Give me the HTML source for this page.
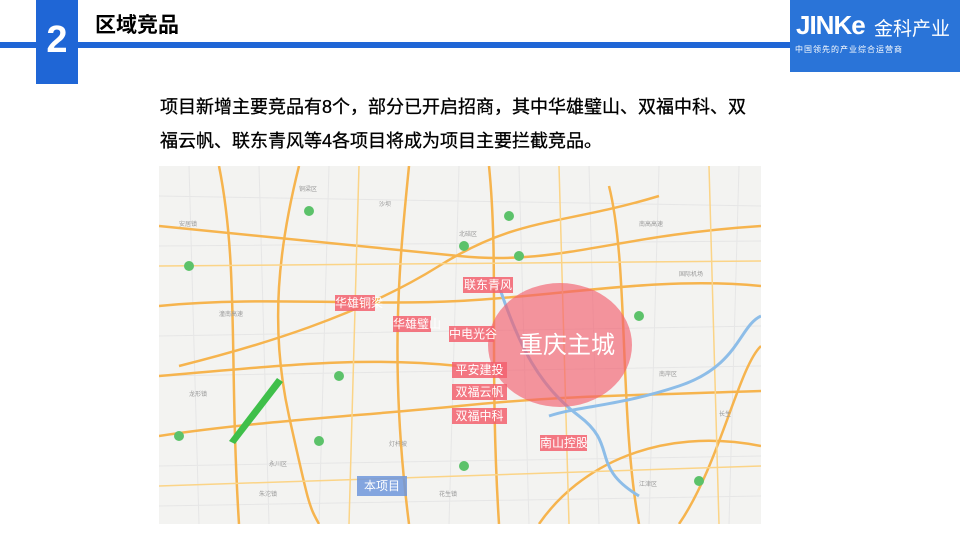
<!DOCTYPE html>
<html><head><meta charset="utf-8"><style>
body{margin:0;width:960px;height:540px;overflow:hidden;background:#fff;font-family:"Liberation Sans","Noto Sans CJK SC",sans-serif;position:relative}
.a{position:absolute}
.lab{position:absolute;background:rgba(242,96,110,.85);color:#fff;font-size:12px;line-height:16px;text-align:center;white-space:nowrap}
</style></head><body>
<div class="a" style="left:0;top:42px;width:792px;height:6px;background:#1f66d6"></div>
<div class="a" style="left:36px;top:0;width:42px;height:84px;background:#1f66d6;color:#fff;font-size:38px;font-weight:bold;text-align:center;line-height:80px">2</div>
<div class="a" style="left:95px;top:9px;font-size:21px;font-weight:bold;color:#000">区域竞品</div>
<div class="a" style="left:790px;top:0;width:170px;height:72px;background:#2a74d8;color:#fff">
<div class="a" style="left:6px;top:10px;font-size:26px;font-weight:bold;letter-spacing:-1px">JINKe</div>
<div class="a" style="left:84px;top:14px;font-size:19px">金科产业</div>
<div class="a" style="left:5px;top:44px;font-size:8px;letter-spacing:1px">中国领先的产业综合运营商</div>
</div>
<div class="a" style="left:160px;top:90px;font-size:18px;line-height:34px;color:#000;width:620px;-webkit-text-stroke:0.3px #000">项目新增主要竞品有8个，部分已开启招商，其中华雄璧山、双福中科、双<br>福云帆、联东青风等4各项目将成为项目主要拦截竞品。</div>
<svg class="a" style="left:159px;top:166px" width="602" height="358" viewBox="0 0 602 358">
<rect width="602" height="358" fill="#f3f3f1"/>
<g fill="none" stroke="#e6e6e6" stroke-width="1">
<path d="M0 30 L602 40M0 80 L602 75M0 170 L602 160M0 210 L602 200M0 300 L602 290M0 340 L602 330M30 0 L40 358M100 0 L110 358M170 0 L160 358M300 0 L290 358M360 0 L370 358M430 0 L440 358M500 0 L490 358M580 0 L570 358"/>
</g>
<g fill="none" stroke="#f6b44e" stroke-width="2.5">
<path d="M0 140 C100 130 200 140 300 135 S500 110 602 120"/>
<path d="M0 270 C100 255 200 250 300 240 S450 230 602 225"/>
<path d="M140 0 C120 80 110 160 130 250 S150 340 160 358"/>
<path d="M250 0 C240 100 230 200 250 358"/>
<path d="M330 0 C340 100 330 200 340 358"/>
<path d="M450 20 C470 100 460 250 480 358"/>
<path d="M20 200 C100 180 200 150 280 100 S400 60 500 30"/>
<path d="M380 358 C420 300 500 260 602 280"/>
<path d="M520 358 C560 300 580 200 602 180"/>
<path d="M0 60 C100 70 200 80 300 90 S450 70 602 60"/>
<path d="M60 0 C80 100 70 200 80 358"/>
<path d="M0 210 C120 200 200 190 300 200"/>
</g>
<g fill="none" stroke="#fbd487" stroke-width="1.5">
<path d="M0 100 L602 95"/><path d="M200 0 L190 358"/><path d="M0 320 L602 300"/><path d="M400 0 L410 358"/><path d="M550 0 L560 358"/>
</g>
<path d="M340 120 C360 180 380 220 420 250 S430 300 480 330" fill="none" stroke="#8dbde8" stroke-width="3"/>
<path d="M390 250 C420 240 460 240 520 220 S580 160 602 150" fill="none" stroke="#8dbde8" stroke-width="3"/>
<path d="M70 275 L118 212 L124 216 L76 278Z" fill="#3fbf4a"/>
<g fill="#5cc26a"><circle cx="150" cy="45" r="5"/><circle cx="305" cy="80" r="5"/><circle cx="360" cy="90" r="5"/><circle cx="30" cy="100" r="5"/><circle cx="180" cy="210" r="5"/><circle cx="160" cy="275" r="5"/><circle cx="305" cy="300" r="5"/><circle cx="540" cy="315" r="5"/><circle cx="480" cy="150" r="5"/><circle cx="20" cy="270" r="5"/><circle cx="350" cy="50" r="5"/></g>
<g fill="#999" font-size="6" font-family="Liberation Sans,Noto Sans CJK SC,sans-serif">
<text x="20" y="60">安居镇</text><text x="140" y="25">铜梁区</text><text x="220" y="40">沙坝</text><text x="300" y="70">北碚区</text><text x="60" y="150">潼南高速</text><text x="30" y="230">龙形镇</text><text x="110" y="300">永川区</text><text x="480" y="60">南高高速</text><text x="520" y="110">国际机场</text><text x="500" y="210">南岸区</text><text x="230" y="280">灯杆坡</text><text x="480" y="320">江津区</text><text x="560" y="250">长生</text><text x="100" y="330">朱沱镇</text><text x="280" y="330">花生镇</text>
</g>
<ellipse cx="401" cy="179" rx="72" ry="62" fill="rgba(242,96,110,.65)"/>
<text x="360" y="187" font-size="24" fill="#fff" font-family="Liberation Sans,Noto Sans CJK SC,sans-serif">重庆主城</text>
</svg>
<div class="lab" style="left:463px;top:277px;width:50px">联东青风</div>
<div class="lab" style="left:335px;top:295px;width:40px">华雄铜梁</div>
<div class="lab" style="left:393px;top:316px;width:38px">华雄璧山</div>
<div class="lab" style="left:449px;top:326px;width:45px">中电光谷</div>
<div class="lab" style="left:452px;top:362px;width:55px">平安建投</div>
<div class="lab" style="left:452px;top:384px;width:55px">双福云帆</div>
<div class="lab" style="left:452px;top:408px;width:55px">双福中科</div>
<div class="lab" style="left:540px;top:435px;width:47px">南山控股</div>
<div class="lab" style="left:357px;top:476px;width:50px;height:20px;line-height:20px;background:rgba(110,150,220,.85)">本项目</div>
</body></html>
